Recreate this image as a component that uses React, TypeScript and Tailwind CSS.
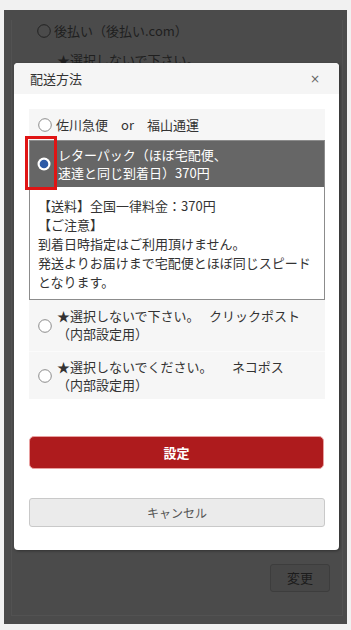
import React from "react";

const font = { fontFamily: '"Noto Sans CJK JP", "Noto Sans", sans-serif' };

function Radio({ dark }: { dark?: boolean }) {
  return (
    <svg width="14" height="14" viewBox="0 0 14 14" className="shrink-0">
      <circle cx="7" cy="7" r="6.3" fill={dark ? "none" : "#fff"} stroke={dark ? "#222" : "#8a8a8a"} strokeWidth="1" />
    </svg>
  );
}

function RadioChecked() {
  return (
    <svg width="14" height="14" viewBox="0 0 14 14" className="shrink-0">
      <circle cx="7" cy="7" r="6.5" fill="#fff" />
      <circle cx="7" cy="7" r="4.3" fill="#2d5aa6" />
    </svg>
  );
}

export default function App() {
  return (
    <div className="relative w-[351px] h-[630px] overflow-hidden bg-[#f1f1f1] pt-[10px] pl-[4px] text-[13px] text-[#333]" style={font}>
      {/* underlying page under dark overlay */}
      <div className="w-[343px] h-[614px] bg-[#4b4b4b] pt-[10px] pl-[7px] pr-[4px] pb-[8px]">
        <div className="h-full border-r border-b border-l border-[#525252] flex flex-col">
          <div className="flex items-center gap-[3px] pl-[25px] h-[16px] mt-[3px] text-[#1f1f1f] leading-[16px]">
            <Radio dark />
            <span>後払い（後払い.com）</span>
          </div>
          <div className="pl-[45px] mt-[13px] text-[#1f1f1f] leading-[16px]">★選択しないで下さい。</div>
          <div className="flex-1" />
          <div className="flex justify-end pr-[12px] mb-[23px]">
            <div className="w-[60px] h-[28px] rounded-[3px] bg-[#474747] border border-[#3d3d3d] flex items-center justify-center text-[#1c1c1c] text-[13px]">
              変更
            </div>
          </div>
        </div>
      </div>

      {/* modal */}
      <div className="absolute left-[14px] top-[63px] w-[325px] h-[487px] bg-white rounded-[4px] shadow-[1px_1px_3px_rgba(0,0,0,0.35)] overflow-hidden">
        <div className="h-[31px] bg-[#f5f5f5] flex items-center justify-between pl-[16px] pr-[19px]">
          <span className="text-[13px] text-[#333] leading-none">配送方法</span>
          <span className="text-[12px] text-[#666] leading-none" style={{ fontFamily: '"DejaVu Sans", sans-serif' }}>×</span>
        </div>
        <div className="px-[15px] pt-[15px]">
          <div className="w-[296px]">
            {/* option 1 */}
            <div className="h-[31px] bg-[#f6f6f6] flex items-center pl-[9px] gap-[4px] leading-[18px]">
              <Radio />
              <span className="whitespace-pre">佐川急便　or　福山通運</span>
            </div>
            {/* option 2 selected */}
            <div className="border border-[#8c8c8c]">
              <div className="relative h-[46px] bg-[#666666] flex items-center text-white leading-[18px]">
                <div className="w-[27px] h-full flex items-center justify-center pl-[1px]">
                  <RadioChecked />
                </div>
                <div className="pl-[1px]">
                  <div>レターパック（ほぼ宅配便、</div>
                  <div>速達と同じ到着日）370円</div>
                </div>
                <div className="absolute left-[-5px] top-[-5px] w-[32px] h-[54px] border-[3px] border-[#e01414]" />
              </div>
              <div className="px-[8px] pt-[9px] pb-[8px] leading-[19px] text-[#333]">
                <div>【送料】全国一律料金：370円</div>
                <div>【ご注意】</div>
                <div>到着日時指定はご利用頂けません。</div>
                <div>発送よりお届けまで宅配便とほぼ同じスピード</div>
                <div>となります。</div>
              </div>
            </div>
            {/* option 3 */}
            <div className="h-[52px] bg-[#f6f6f6] border-b border-[#fbfbfb] flex items-center pl-[9px] gap-[5px] leading-[18px]">
              <Radio />
              <div className="pb-[1px]">
                <div className="whitespace-pre">★選択しないで下さい。　 クリックポスト</div>
                <div>（内部設定用）</div>
              </div>
            </div>
            {/* option 4 */}
            <div className="h-[47px] bg-[#f6f6f6] flex items-center pl-[9px] gap-[5px] leading-[18px]">
              <Radio />
              <div>
                <div className="whitespace-pre">★選択しないでください。　　ネコポス</div>
                <div>（内部設定用）</div>
              </div>
            </div>
          </div>

          <div className="mt-[37px] w-[295px] h-[33px] rounded-[5px] bg-[#ae1b1d] border border-[#e9a0a0] flex items-center justify-center text-white text-[13px] font-bold">
            設定
          </div>
          <div className="mt-[29px] w-[296px] h-[29px] rounded-[3px] bg-[#ebebeb] border border-[#c9c9c9] flex items-center justify-center text-[#555] text-[12px]">
            キャンセル
          </div>
        </div>
      </div>
    </div>
  );
}
